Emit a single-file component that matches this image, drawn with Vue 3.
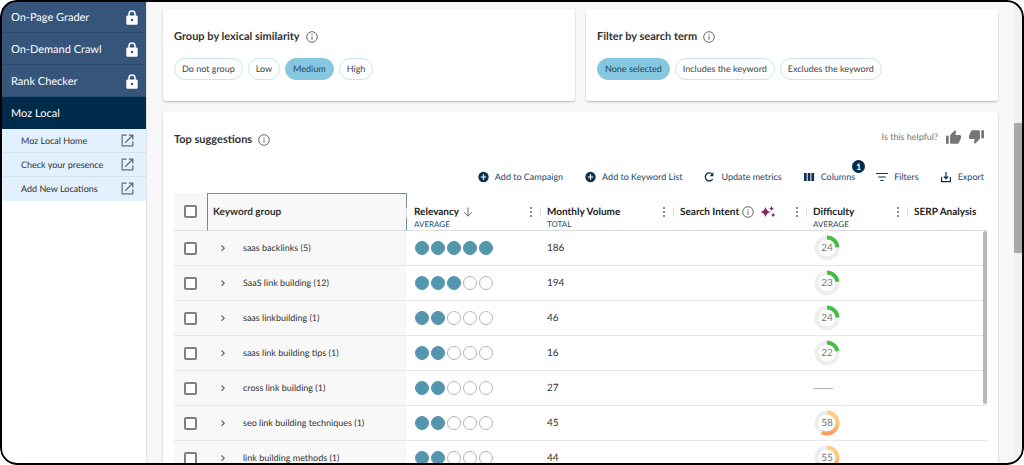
<script setup>
import { ref } from 'vue'

const lockedTools = ['On-Page Grader', 'On-Demand Crawl', 'Rank Checker']
const localLinks = ['Moz Local Home', 'Check your presence', 'Add New Locations']

const filterCards = ref([
  { title: 'Group by lexical similarity', options: ['Do not group', 'Low', 'Medium', 'High'], selected: 'Medium' },
  { title: 'Filter by search term', options: ['None selected', 'Includes the keyword', 'Excludes the keyword'], selected: 'None selected' },
])

const actions = [
  { label: 'Add to Campaign', icon: 'plus' },
  { label: 'Add to Keyword List', icon: 'plus' },
  { label: 'Update metrics', icon: 'refresh' },
  { label: 'Columns', icon: 'columns', badge: 1 },
  { label: 'Filters', icon: 'filter' },
  { label: 'Export', icon: 'export' },
]

const rows = [
  { name: 'saas backlinks (5)', relevancy: 5, volume: 186, difficulty: 24 },
  { name: 'SaaS link building (12)', relevancy: 3, volume: 194, difficulty: 23 },
  { name: 'saas linkbuilding (1)', relevancy: 2, volume: 46, difficulty: 24 },
  { name: 'saas link building tips (1)', relevancy: 2, volume: 16, difficulty: 22 },
  { name: 'cross link building (1)', relevancy: 2, volume: 27, difficulty: null },
  { name: 'seo link building techniques (1)', relevancy: 2, volume: 45, difficulty: 58 },
  { name: 'link building methods (1)', relevancy: 2, volume: 44, difficulty: 55 },
]

const ringColor = (value) => (value > 50 ? 'url(#ring-warm)' : '#48bd45')
</script>

<template>
  <div class="app">
    <svg class="defs" aria-hidden="true">
      <defs>
        <linearGradient id="ring-warm" x1="1" y1="0" x2="0" y2="0">
          <stop offset="0" stop-color="#ffd080" />
          <stop offset="0.5" stop-color="#ffc878" />
          <stop offset="1" stop-color="#ff9a5c" />
        </linearGradient>
      </defs>
    </svg>

    <nav class="sidebar">
      <a v-for="tool in lockedTools" :key="tool" href="#" class="tool">
        {{ tool }}
        <svg class="lock" viewBox="0 0 12 15" aria-hidden="true">
          <path d="M3 6V4a3 3 0 0 1 6 0v2" fill="none" stroke="#fff" stroke-width="1.5" />
          <rect x="0.3" y="5.5" width="11.4" height="9.2" rx="1.3" fill="#fff" />
          <circle cx="6" cy="10" r="1.3" fill="#36557b" />
        </svg>
      </a>
      <a href="#" class="tool current">Moz Local</a>
      <a v-for="link in localLinks" :key="link" href="#" class="sub">
        {{ link }}
        <svg class="open" viewBox="0 0 14 14" fill="none" stroke="#666b70" stroke-width="1.3" aria-hidden="true">
          <path d="M6 1.2H1.2v11.6h11.6V8M8.4 1.2h4.4v4.4M12.6 1.4L4.6 9.4" />
        </svg>
      </a>
    </nav>

    <main class="main">
      <div class="filters">
        <section v-for="card in filterCards" :key="card.title" class="card filter-card">
          <h2>
            {{ card.title }}
            <svg class="info" viewBox="0 0 12 12" fill="none" stroke="#666" aria-hidden="true">
              <circle cx="6" cy="6" r="5.3" /><path d="M6 5.2v3.6M6 3.1v1.1" />
            </svg>
          </h2>
          <div class="chips">
            <button
              v-for="option in card.options"
              :key="option"
              type="button"
              class="chip"
              :class="{ on: option === card.selected }"
              @click="card.selected = option"
            >{{ option }}</button>
          </div>
        </section>
      </div>

      <section class="card results">
        <header class="results-head">
          <h2>
            Top suggestions
            <svg class="info" viewBox="0 0 12 12" fill="none" stroke="#666" aria-hidden="true">
              <circle cx="6" cy="6" r="5.3" /><path d="M6 5.2v3.6M6 3.1v1.1" />
            </svg>
          </h2>
          <div class="helpful">
            <span>Is this helpful?</span>
            <button type="button" class="thumb" aria-label="Yes">
              <svg viewBox="1 1 22 20" fill="#757575"><path d="M1 21h4V9H1v12zm22-11c0-1.100-.9-2-2-2h-6.310l.95-4.570.03-.32c0-.41-.17-.79-.44-1.060L14.170 1 7.590 7.590C7.220 7.950 7 8.450 7 9v10c0 1.100.9 2 2 2h9c.83 0 1.540-.5 1.840-1.220l3.020-7.050c.09-.23.14-.47.14-.73v-2z" /></svg>
            </button>
            <button type="button" class="thumb" aria-label="No">
              <svg viewBox="1 3 22 20" fill="#757575"><path d="M15 3H6c-.83 0-1.540.5-1.840 1.220l-3.020 7.050c-.09.23-.14.47-.14.73v2c0 1.100.9 2 2 2h6.310l-.95 4.570-.03.32c0 .41.17.79.44 1.060L9.830 23l6.590-6.590c.36-.36.58-.86.58-1.410V5c0-1.100-.9-2-2-2zm4 0v12h4V3h-4z" /></svg>
            </button>
          </div>
        </header>

        <div class="toolbar">
          <button v-for="action in actions" :key="action.label" type="button" class="action">
            <svg v-if="action.icon === 'plus'" viewBox="0 0 12 12"><circle cx="6.500" cy="6" r="5.200" fill="#0b3052" /><path d="M6.500 3.300v5.400M3.800 6h5.400" stroke="#fff" stroke-width="1.200" /></svg>
            <svg v-else-if="action.icon === 'refresh'" viewBox="0 0 12 12" fill="none"><path d="M9.700 8A4 4 0 1 1 9.300 3.300" stroke="#0b3052" stroke-width="1.300" /><path d="M10.400 1.200v4H6.600z" fill="#0b3052" /></svg>
            <svg v-else-if="action.icon === 'columns'" viewBox="0 0 12 12" fill="#0b3052"><path d="M1 2h2.700v8H1zM4.700 2h2.700v8H4.700zM8.400 2h2.700v8H8.400z" /></svg>
            <svg v-else-if="action.icon === 'filter'" viewBox="0 0 12 12" fill="none" stroke="#0b3052" stroke-width="1.200"><path d="M0 2.500h12M2.200 6h7.600M4.400 9.500h3.200" /></svg>
            <svg v-else viewBox="0 0 12 12" fill="none" stroke="#0b3052" stroke-width="1.200"><path d="M1.600 6v4.600h8.800V6M6 1v6.500M3.800 5.500L6 7.700l2.200-2.200" /></svg>
            <span>{{ action.label }}</span>
            <span v-if="action.badge" class="badge">{{ action.badge }}</span>
          </button>
        </div>

        <div class="grid">
          <table>
            <colgroup>
              <col class="c-check" /><col class="c-name" /><col class="c-wide" /><col class="c-wide" /><col class="c-wide" /><col class="c-mid" /><col />
            </colgroup>
            <thead>
              <tr>
                <th class="check"><input type="checkbox" aria-label="Select all" /></th>
                <th class="group">Keyword group</th>
                <th>
                  <div class="label">
                    Relevancy
                    <svg class="arrow" viewBox="0 0 10 10" fill="none" stroke="#666"><path d="M5 0.500v8.500M1.200 5.400L5 9.200l3.800-3.800" /></svg>
                    <span class="more"><i></i><i></i><i></i></span>
                  </div>
                  <small>AVERAGE</small>
                </th>
                <th>
                  <div class="label">Monthly Volume<span class="more"><i></i><i></i><i></i></span></div>
                  <small>TOTAL</small>
                </th>
                <th>
                  <div class="label">
                    Search Intent
                    <svg class="info small" viewBox="0 0 12 12" fill="none" stroke="#666"><circle cx="6" cy="6" r="5.300" /><path d="M6 5.200v3.600M6 3.100v1.100" /></svg>
                    <svg class="sparkle" viewBox="0 0 16 12" fill="#85286f"><path d="M5.500 1Q6.500 5 10.500 6 6.500 7 5.500 11 4.500 7 .5 6 4.500 5 5.500 1zM11.500 0q.5 2 2.300 2.500-1.800.5-2.300 2.500-.5-2-2.300-2.500Q11 2 11.500 0zM13.200 6.800q.5 1.700 2.200 2.200-1.700.5-2.200 2.200-.5-1.700-2.200-2.200 1.700-.5 2.200-2.200z" /></svg>
                    <span class="more"><i></i><i></i><i></i></span>
                  </div>
                  <small>&nbsp;</small>
                </th>
                <th>
                  <div class="label">Difficulty<span class="more"><i></i><i></i><i></i></span></div>
                  <small>AVERAGE</small>
                </th>
                <th>
                  <div class="label">SERP Analysis</div>
                  <small>&nbsp;</small>
                </th>
              </tr>
            </thead>
            <tbody>
              <tr v-for="row in rows" :key="row.name">
                <td class="check"><input type="checkbox" :aria-label="row.name" /></td>
                <td class="name">
                  <div>
                    <button type="button" class="expand" :aria-label="'Expand ' + row.name">
                      <svg viewBox="0 0 6 8" fill="none" stroke="#666" stroke-width="1.200"><path d="M1.500 1.500L4.200 4.200l-2.700 2.700" /></svg>
                    </button>
                    {{ row.name }}
                  </div>
                </td>
                <td>
                  <div class="dots"><i v-for="n in 5" :key="n" :class="{ full: n <= row.relevancy }"></i></div>
                </td>
                <td>{{ row.volume }}</td>
                <td></td>
                <td>
                  <div v-if="row.difficulty" class="ring">
                    <svg viewBox="0 0 26 26" fill="none" stroke-width="4">
                      <circle cx="13" cy="13" r="10.500" stroke="#eee" />
                      <circle cx="13" cy="13" r="10.500" pathLength="100" :stroke="ringColor(row.difficulty)" :stroke-dasharray="row.difficulty + ' 100'" transform="rotate(-90 13 13)" />
                    </svg>
                    <span>{{ row.difficulty }}</span>
                  </div>
                  <div v-else class="dash"></div>
                </td>
                <td></td>
              </tr>
            </tbody>
          </table>
          <div class="grid-thumb"></div>
        </div>
      </section>
    </main>

    <div class="scrollbar"><div class="scroll-thumb"></div></div>
  </div>
</template>

<style>
body { background: #fff; }
</style>

<style scoped>
.app {
  position: relative;
  display: flex;
  box-sizing: border-box;
  height: 100vh;
  padding: 1px 2px 0;
  overflow: hidden;
  border-radius: 17px;
  background: #fff;
  color: #333;
  font-family: Lato, "Liberation Sans", sans-serif;
  font-size: 10px;
  line-height: 14px;
  text-rendering: geometricPrecision;
}
.app::after {
  content: "";
  position: absolute;
  inset: 0;
  border: 2px solid #000;
  border-radius: 17px;
  pointer-events: none;
}
.defs { position: absolute; width: 0; height: 0; }
button { padding: 0; border: 0; background: none; color: inherit; font: inherit; text-rendering: inherit; cursor: pointer; }
h2 { display: flex; align-items: center; gap: 6px; margin: 0; font-size: 11px; line-height: 16px; font-weight: 700; }
svg { display: block; flex: none; }

.sidebar { flex: none; width: 144px; }
.tool, .sub { display: flex; align-items: center; justify-content: space-between; box-sizing: border-box; text-decoration: none; }
.tool { height: 32px; padding: 2px 8px 0 9px; border-bottom: 1px solid #2d4c70; background: #36557b; color: #fff; font-size: 11px; }
.tool.current { border-color: #002b4b; background: #002b4b; }
.sub { height: 24px; padding: 0 12px 0 19px; border-bottom: 1px solid #d3e2ee; background: #e2f1fd; color: #333; font-size: 9px; }
.sub:last-child { border-color: #e2f1fd; }
.lock { width: 12px; height: 15px; }
.open { width: 13px; height: 13px; }

.main { flex: 1; min-width: 0; padding: 8px 16px 0; border-left: 1px solid #e4e4e4; background: #f7f7f7; }
.filters { display: grid; grid-template-columns: 1fr 1fr; gap: 11px; margin-bottom: 11px; }
.card { border-radius: 3px; background: #fff; box-shadow: 0 1px 2px rgba(0, 0, 0, 0.25); }
.filter-card { padding: 20px 11px 21px; }
.info { width: 12px; height: 12px; }
.chips { display: flex; gap: 5px; margin-top: 13px; }
.chip { height: 22px; padding: 0 7px; border: 1px solid #c6e6f2; border-radius: 11px; color: #444; font-size: 9px; }
.chip.on { border-color: #85c7df; background: #85c7df; color: #23475a; }

.results { min-height: 500px; padding: 10px 11px 0; }
.results-head { display: flex; align-items: flex-end; justify-content: space-between; height: 30px; }
.results-head h2 { height: 24px; }
.helpful { display: flex; align-items: center; gap: 8px; height: 30px; padding-right: 3px; color: #757575; font-size: 9px; }
.thumb svg { width: 15px; height: 14px; }
.toolbar { display: flex; justify-content: flex-end; gap: 21px; height: 24px; margin: 13px 3px 4px 0; }
.action { position: relative; display: flex; align-items: center; gap: 6px; color: #24476a; font-size: 9px; }
.action svg { width: 12px; height: 12px; }
.badge { position: absolute; top: -5px; right: -10px; width: 13px; height: 13px; border-radius: 50%; background: #002b4b; color: #fff; font-size: 9px; line-height: 13px; font-weight: 700; text-align: center; }

.grid { position: relative; }
table { width: 100%; table-layout: fixed; border-collapse: separate; border-spacing: 0; }
.c-check { width: 33px; }
.c-name { width: 200px; }
.c-wide { width: 133px; }
.c-mid { width: 101px; }
th, td { box-sizing: border-box; padding: 0 0 0 7px; text-align: left; white-space: nowrap; }
th { position: relative; height: 38px; padding-top: 13px; border-bottom: 1px solid #ddd; vertical-align: top; font-weight: 700; line-height: 12px; }
th small { display: block; color: #24476a; font-size: 8px; line-height: 12px; font-weight: 400; }
th + th:not(:last-child)::after { content: ""; position: absolute; right: -1px; top: 14px; width: 1px; height: 10px; background: #ddd; }
td { height: 35px; border-bottom: 1px solid #e6e6e6; }
.check, .group, .name { background: #f8f8f8; }
th.check { padding: 0 0 0 10px; vertical-align: middle; }
td.check { padding-left: 10px; }
th.group { padding: 12px 0 0 5px; border: 1px solid #6f8ca3; border-bottom-color: #ddd; }
td.name { padding-left: 6px; font-size: 9px; }
.name div { display: flex; align-items: center; gap: 10px; }
input { display: block; appearance: none; box-sizing: border-box; width: 13px; height: 13px; margin: 0; border: 2px solid #808080; border-radius: 2px; background: #fff; }
.expand { display: grid; place-items: center; width: 20px; height: 20px; }
.expand svg { width: 6px; height: 8px; }
.label { display: flex; align-items: center; height: 12px; padding-right: 8px; color: #222; }
.label .arrow { width: 10px; height: 10px; margin-left: 4px; }
.label .small { margin-left: 3px; }
.sparkle { width: 16px; height: 12px; margin-left: 6px; }
.more { display: grid; gap: 2px; margin-left: auto; }
.more i { width: 2px; height: 2px; border-radius: 50%; background: #666; }
.dots { display: flex; gap: 2px; padding-left: 1px; }
.dots i { box-sizing: border-box; width: 14px; height: 14px; border: 1px solid #b5b5b5; border-radius: 50%; }
.dots .full { border-color: #5596af; background: #5596af; }
.ring { display: grid; place-items: center; width: 26px; height: 26px; margin-left: 1px; color: #777; }
.ring > * { grid-area: 1 / 1; }
.ring svg { width: 26px; height: 26px; }
.dash { width: 19px; height: 1px; margin-left: 1px; background: #b0b0b0; }
.grid-thumb { position: absolute; top: 38px; right: 0; width: 4px; height: 173px; border-radius: 2px; background: #b8b8b8; }

.scrollbar { flex: none; width: 8px; padding-top: 122px; background: #f0f0f0; }
.scroll-thumb { height: 130px; background: #a8a8a8; }
</style>
